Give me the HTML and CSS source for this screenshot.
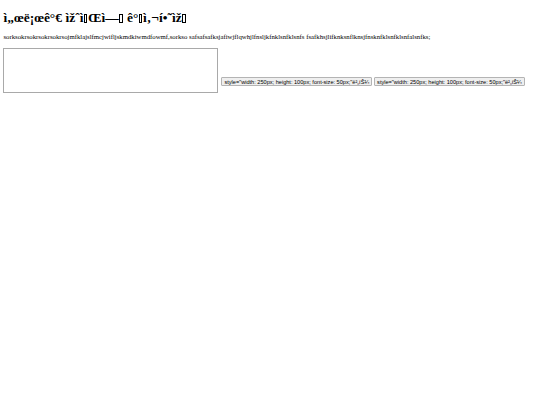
FILE: index.html
```html
<!DOCTYPE html>
<html>
<head>
<meta charset="utf-8">
<link rel="stylesheet" href="styles.css">
</head>
<body>
<h1 class="title">ì„œë¡œê°€ ìžˆì<span class="ctl">&#x9D;</span>Œì—<span class="ctl">&#x90;</span> ê°<span class="ctl">&#x90;</span>ì‚¬í•˜ìž<span class="ctl">&#x90;</span></h1>
<p class="text">sorksokrsokrsokrsokrsojmfklajslfmcjwifljskmdkiwmdfowmf,sorkso safsafsafksjafiwjflqwhjlfnsljkfnklsnfklsnfs fsafkhsjlifknksnflknsjfnsknfklsnfklsnfalsnfks;</p>
<div class="row">
  <textarea class="area"></textarea>
  <button class="btn">style="width: 250px; height: 100px; font-size: 50px;"ë²„íŠ¼</button>
  <button class="btn">style="width: 250px; height: 100px; font-size: 50px;"ë²„íŠ¼</button>
</div>
</body>
</html>
```
FILE: styles.css
```css
html, body {
  background: #fff;
}
body {
  margin: 3.4px;
  font-family: "Liberation Serif", "Times New Roman", serif;
  font-size: 6.75px;
  color: #000;
}
.title {
  font-size: 13.5px;
  font-weight: bold;
  margin: 7px 0 8px;
  line-height: 15px;
}
.ctl {
  display: inline-block;
  width: 3.5px;
  height: 8.5px;
  border: 0.8px solid #000;
  box-sizing: border-box;
  overflow: hidden;
  color: transparent;
  font-size: 1px;
  line-height: 1px;
  margin: 0 0.6px;
  vertical-align: -0.5px;
}
.text {
  margin: 6.75px 0;
  line-height: 8px;
}
.row {
  display: flex;
  align-items: flex-end;
  gap: 2px;
}
.area {
  width: 215px;
  height: 45px;
  box-sizing: border-box;
  border: 1px solid #a9a9a9;
  padding: 1px;
  margin: 0;
  resize: none;
  font-family: "Liberation Mono", monospace;
  font-size: 5.6px;
}
.btn {
  font-family: "Liberation Sans", Arial, sans-serif;
  font-size: 5.6px;
  padding: 0 2px;
  margin: 0 0 7px 0;
  border: 1px solid #b4b4b4;
  border-radius: 1px;
  background: #efefef;
  color: #000;
  height: 9px;
  line-height: 6px;
  white-space: nowrap;
}
.area + .btn {
  margin-left: 1px;
}
```
